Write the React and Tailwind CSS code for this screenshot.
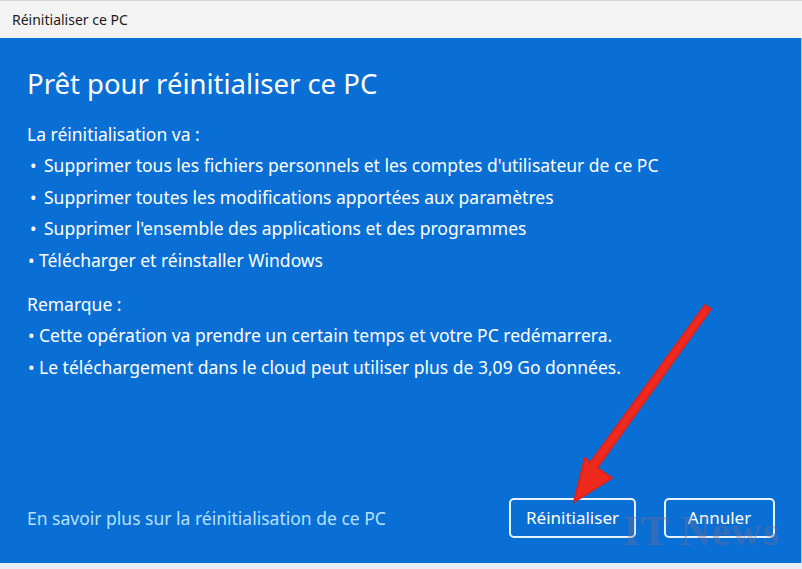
import React from "react";

// Reset-this-PC confirmation dialog (Windows 11 style)
const firstList = [
  { text: "Supprimer tous les fichiers personnels et les comptes d'utilisateur de ce PC", wide: true },
  { text: "Supprimer toutes les modifications apportées aux paramètres", wide: true },
  { text: "Supprimer l'ensemble des applications et des programmes", wide: true },
  { text: "Télécharger et réinstaller Windows", wide: false },
];

const notes = [
  "Cette opération va prendre un certain temps et votre PC redémarrera.",
  "Le téléchargement dans le cloud peut utiliser plus de 3,09 Go données.",
];

function Bullet({ children, wide }) {
  return (
    <li className="flex items-baseline h-[31.5px]">
      <span className={wide ? "w-[17px] pl-[3px]" : "w-[12px] pl-[1px]"}>•</span>
      <span>{children}</span>
    </li>
  );
}

export default function App() {
  return (
    <div
      className="relative w-[802px] h-[569px] overflow-hidden bg-[#f0f0f0] flex flex-col"
      style={{ fontFamily: '"Noto Sans", "Open Sans", sans-serif' }}
    >
      {/* Title bar */}
      <div className="h-[38px] shrink-0 border-t border-[#d6d6d6] bg-[#f3f3f3] flex items-center pl-[12px] text-[14px] text-[#1a1a1a]">
        Réinitialiser ce PC
      </div>

      {/* Blue body */}
      <div className="flex-1 bg-[#0a6fd5] border-r border-[#a9c7e6] flex flex-col text-white pl-[27px] pr-[26px]">
        <h1 className="mt-[26px] text-[27.5px] leading-[40px] font-normal">
          Prêt pour réinitialiser ce PC
        </h1>

        <div className="mt-[15px] text-[17.5px]">
          <p className="h-[31px] leading-[31px]">La réinitialisation va :</p>
          <ul className="leading-[31px]">
            {firstList.map((item) => (
              <Bullet key={item.text} wide={item.wide}>
                {item.text}
              </Bullet>
            ))}
          </ul>

          <p className="mt-[13px] h-[31px] leading-[31px]">Remarque :</p>
          <ul className="leading-[31px]">
            {notes.map((n) => (
              <Bullet key={n}>{n}</Bullet>
            ))}
          </ul>
        </div>

        {/* Footer: link + buttons */}
        <div className="mt-auto mb-[25px] flex items-center">
          <span className="text-[17.5px] text-[#b5e0ff]">
            En savoir plus sur la réinitialisation de ce PC
          </span>
          <div className="ml-auto flex gap-[28px]">
            <button className="w-[127px] h-[40px] rounded-[5px] border-2 border-[#e8f2fc] text-[17px] text-white">
              Réinitialiser
            </button>
            <button className="w-[111px] h-[40px] rounded-[5px] border-2 border-[#e8f2fc] text-[17px] text-white">
              Annuler
            </button>
          </div>
        </div>
      </div>

      {/* Cut-off strip under the dialog */}
      <div className="h-[6px] shrink-0 bg-[#e9eef4]" />

      {/* Watermark */}
      <span
        className="absolute left-[623px] top-[500px] text-[42px] font-bold text-[#7d6a86] opacity-35 tracking-[1px] pointer-events-none"
        style={{ fontFamily: '"Liberation Serif", serif' }}
      >
        IT News
      </span>

      {/* Red annotation arrow */}
      <svg className="absolute inset-0 pointer-events-none" width="802" height="569" viewBox="0 0 802 569">
        <path
          d="M705 305 L711 309 L597 468 L612 478 L574 502 L585 458 L590 463 Z"
          fill="#f0291f"
          stroke="#e0231a"
          strokeLinejoin="round"
          strokeWidth="2"
        />
      </svg>
    </div>
  );
}
